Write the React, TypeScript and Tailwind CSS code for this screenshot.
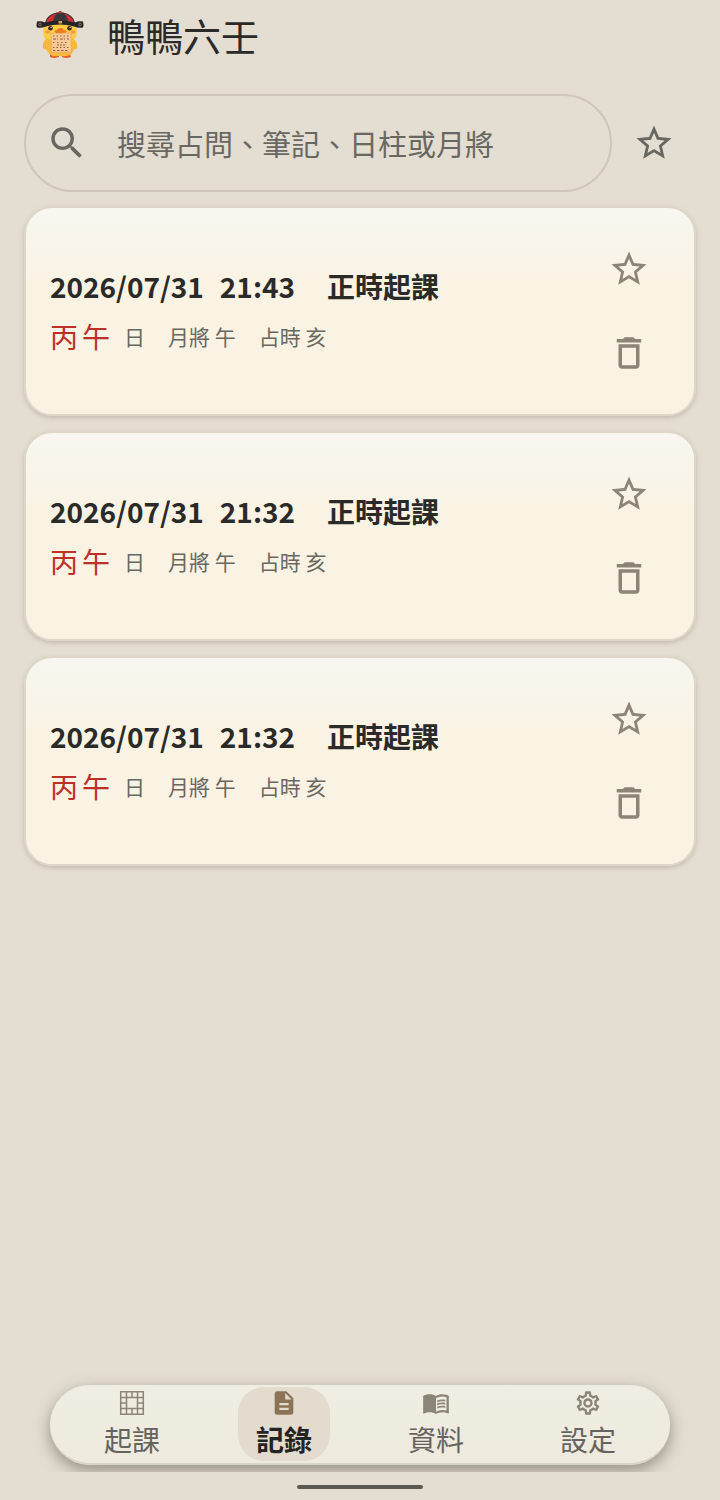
import React from 'react';
import { MdDeleteOutline, MdDescription, MdMenuBook, MdOutlineSettings, MdSearch, MdStarBorder } from 'react-icons/md';

const records = [
  { id: 1, date: '2026/07/31', time: '21:43', method: '正時起課', stem: '丙', branch: '午', general: '午', hour: '亥' },
  { id: 2, date: '2026/07/31', time: '21:32', method: '正時起課', stem: '丙', branch: '午', general: '午', hour: '亥' },
  { id: 3, date: '2026/07/31', time: '21:32', method: '正時起課', stem: '丙', branch: '午', general: '午', hour: '亥' },
];

const DuckLogo: React.FC<{ className?: string }> = ({ className }) => (
  <svg className={className} viewBox="0 0 48 48" aria-hidden="true">
    <path d="M14 43h9v3q-5 2-9 0zM26 43h8l1 3q-5 2-9 0z" fill="#e8622c" />
    <path d="M11 27q-5 4-4 10 3 3 7 1V27zM36 27q6 4 5 10-3 3-6 1z" fill="#f6b535" />
    <path d="M10 30q-1 13 7 15h14q9-2 7-15z" fill="#f8b93a" />
    <path d="M7 20q0-7 9-8h17q8 1 8 8 0 9-7 11H14q-7-2-7-11z" fill="#fdcd42" />
    <path d="M9 26q4 4 15 4t15-4l-4 5H13z" fill="#f5b636" />
    <ellipse cx="11.500" cy="21" rx="2.500" ry="1.800" fill="#f59a55" />
    <ellipse cx="37" cy="21" rx="2.500" ry="1.800" fill="#f59a55" />
    <circle cx="14.500" cy="17.300" r="2.300" fill="#38261c" />
    <circle cx="33.500" cy="17.300" r="2.300" fill="#38261c" />
    <circle cx="15.100" cy="16.600" r=".7" fill="#fff" />
    <circle cx="34.100" cy="16.600" r=".7" fill="#fff" />
    <path d="M18 20q4-1 5-3h3q1 2 5 3-2 3-6.500 3T18 20z" fill="#ee7b24" />
    <path d="M15 22.500L35 22l.5 19-20 .5z" fill="#f7ca98" stroke="#e0a365" strokeWidth=".6" />
    <g stroke="#985a3a" strokeWidth="1.200" fill="none">
      <path d="M17 25h16" strokeDasharray="1.500 2" />
      <path d="M17 28h16" strokeDasharray="3 1 1 2" />
      <path d="M17 31.500h16" strokeDasharray="1.500 2.500" />
      <path d="M21 34h8" strokeDasharray="2 1" />
      <path d="M17 36.500h16" strokeDasharray="1.500 2" />
      <path d="M17 39.500h16" strokeDasharray="2.500 1.500" />
    </g>
    <path d="M9 14Q10 4 21 1.500q3-2 6 0Q38 4 39 14q-15-5-30 0z" fill="#cf3034" />
    <path d="M17 12q0-7 5-10h5q5 3 5 10z" fill="#3b373b" />
    <path d="M9.500 12Q11 4 21 2M38.500 12Q37 4 27 2" stroke="#343234" strokeWidth="1.200" fill="none" />
    <path d="M1 10.500q4-1 8 1 15-4 30 0 4-2 8-1 1 3 0 6-4 1-9-1-14-4-28 0-5 2-9 1-1-3 0-6z" fill="#252326" />
    <circle cx="4" cy="13.500" r="1.300" fill="none" stroke="#91785c" />
    <circle cx="44" cy="13.500" r="1.300" fill="none" stroke="#91785c" />
    <rect x="22.500" y="10" width="3.500" height="2.500" fill="#d2a565" />
    <path d="M23 0h2.500v2H23z" fill="#8a5d48" />
  </svg>
);

const BoardIcon: React.FC = () => (
  <svg className="size-7" viewBox="0 0 28 28" fill="none" stroke="currentColor" strokeWidth="1.500" aria-hidden="true">
    <path d="M2.700 2.700h22.600v22.600H2.700z" />
    <path d="M8.500 3v22M19.500 3v22M3 8.500h22M3 19.500h22M14 3v5.500M14 19.500v5.500M3 14h5.500M19.500 14h5.500" />
  </svg>
);

const RecordCard: React.FC<{ record: (typeof records)[number] }> = ({ record }) => (
  <li className="flex min-h-[210px] items-center justify-between rounded-[28px] border-2 border-[#ddd6c9] bg-linear-to-b from-[#f8f6f0] to-[#faf3e3] to-40% py-[19px] pr-[23px] pl-6 shadow-[0_2px_4px_#a49c9080]">
    <div className="flex flex-col gap-[10px]">
      <h2 className="flex text-[28px] leading-10 font-bold text-[#2a2a28]">
        <time className="flex gap-4">
          <span>{record.date}</span>
          <span>{record.time}</span>
        </time>
        <span className="ml-8">{record.method}</span>
      </h2>
      <p className="flex items-center text-[21px] leading-10 text-[#696761]">
        <span className="flex gap-1 text-[28px] text-[#bd3028]">
          <span>{record.stem}</span>
          <span>{record.branch}</span>
        </span>
        <span className="ml-[14px]">日</span>
        <span className="ml-[23px]">月將 {record.general}</span>
        <span className="ml-[23px]">占時 {record.hour}</span>
      </p>
    </div>
    <div className="flex flex-col text-[#8b8477]">
      <button type="button" aria-label="收藏" className="flex size-21 items-center justify-center">
        <MdStarBorder size={42} />
      </button>
      <button type="button" aria-label="刪除" className="flex size-21 items-center justify-center">
        <MdDeleteOutline size={42} />
      </button>
    </div>
  </li>
);

const NavItem: React.FC<{ icon: React.ReactNode; label: string; active?: boolean }> = ({ icon, label, active }) => (
  <a href="#" aria-current={active ? 'page' : undefined} className="flex flex-1 justify-center">
    <span className={active ? 'flex flex-col items-center rounded-[26px] bg-[#e3dbce] px-[18px] pt-[2px] text-[#8b7355]' : 'flex flex-col items-center px-[18px] pt-[2px] text-[#8b8477]'}>
      {icon}
      <span className={active ? 'text-[28px] leading-11 font-bold text-[#242424]' : 'text-[28px] leading-11 text-[#65635e]'}>{label}</span>
    </span>
  </a>
);

const App: React.FC = () => {
  return (
    <div className="flex min-h-screen flex-col bg-[#e4ddd1] font-[family-name:'Noto_Sans_CJK_TC',sans-serif]">
      <header className="flex items-center gap-[23px] px-9 pt-[7px]">
        <DuckLogo className="size-12" />
        <h1 className="text-[38px] leading-[56px] font-normal text-[#2a2a28]">鴨鴨六壬</h1>
      </header>

      <main className="flex flex-1 flex-col gap-[14px] px-6 pt-[31px]">
        <div className="flex items-center">
          <label className="flex h-[98px] min-w-0 flex-1 items-center gap-[29px] rounded-full border-2 border-[#cfc6bb] px-5 text-[#696761]">
            <MdSearch size={42} className="shrink-0" />
            <input
              type="search"
              aria-label="搜尋"
              placeholder="搜尋占問、筆記、日柱或月將"
              className="min-w-0 flex-1 bg-transparent text-[29px] leading-10 outline-none placeholder:text-[#696761] placeholder:opacity-100"
            />
          </label>
          <button type="button" aria-label="只看收藏" className="flex size-21 shrink-0 items-center justify-center text-[#696761]">
            <MdStarBorder size={42} />
          </button>
        </div>

        <ul className="flex flex-col gap-[15px]">
          {records.map((record) => (
            <RecordCard key={record.id} record={record} />
          ))}
        </ul>
      </main>

      <footer>
        <div className="overflow-hidden px-[50px] pt-5 pb-[7px]">
          <nav className="flex rounded-full border-b-2 border-[#d8d4c6] bg-linear-to-b from-[#f0ede2] to-[#eeeade] px-[6px] pt-[2px] pb-[2px] shadow-[0_6px_16px_#747064b0]">
            <NavItem icon={<BoardIcon />} label="起課" />
            <NavItem icon={<MdDescription size={28} />} label="記錄" active />
            <NavItem icon={<MdMenuBook size={28} />} label="資料" />
            <NavItem icon={<MdOutlineSettings size={28} />} label="設定" />
          </nav>
        </div>
        <div className="flex justify-center pt-[13px] pb-[11px]">
          <div className="h-1 w-[126px] rounded-full bg-[#5c5951]" />
        </div>
      </footer>
    </div>
  );
};

export default App;
